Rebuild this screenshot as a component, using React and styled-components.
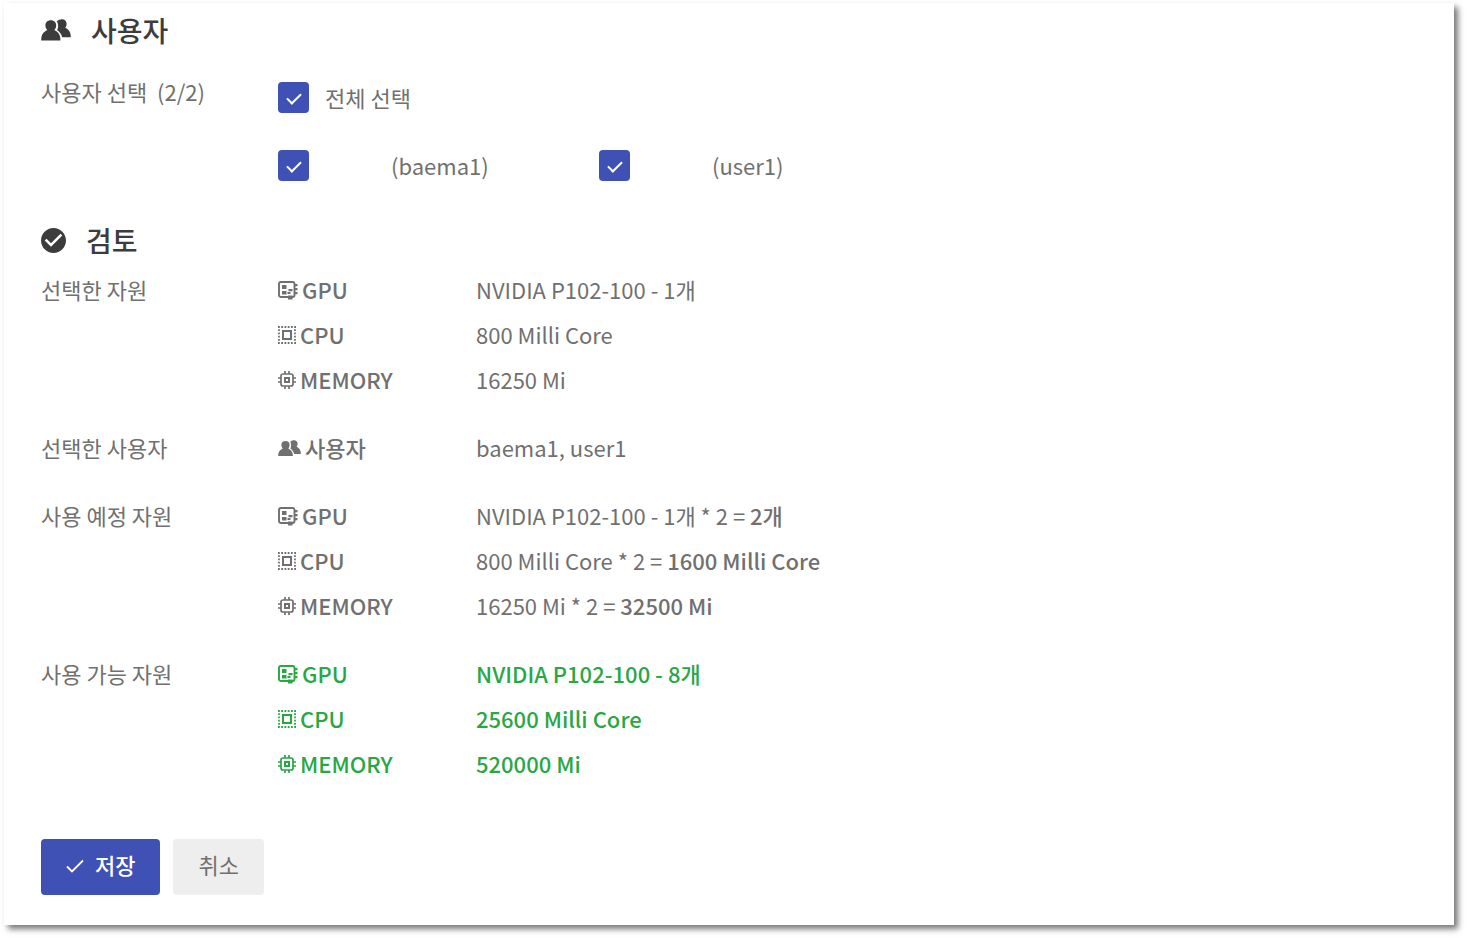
import styled, { createGlobalStyle } from "styled-components";

const GlobalStyle = createGlobalStyle`
  * {
    box-sizing: border-box;
  }

  body {
    margin: 0;
    background-color: white;
    color: #707070;
    font-family: "Noto Sans CJK KR", sans-serif;
    font-size: 22px;
    line-height: 32px;
  }
`;

const Card = styled.form`
  margin: 3px 13px 13px 4px;
  padding: 9px 37px 30px;
  background-color: white;
  box-shadow: 4px 4px 6px #777777;
`;

const Heading = styled.h2`
  display: flex;
  align-items: center;
  gap: 20px;
  margin: ${({ $top }) => $top || 0} 0 0;
  color: #3c3c3c;
  font-size: 28px;
  font-weight: 500;
  line-height: 36px;
`;

const Section = styled.section`
  display: grid;
  grid-template-columns: 237px 1fr;
  margin-top: ${({ $top }) => $top || "36px"};
`;

const Label = styled.div`
  white-space: pre;
`;

const Users = styled.div`
  display: grid;
  grid-template-columns: 321px 1fr;
  row-gap: 36px;
  padding-top: 6px;
`;

const CheckLabel = styled.label`
  display: flex;
  align-items: center;
  gap: ${({ $wide }) => ($wide ? "82px" : "16px")};
  grid-column: ${({ $wide }) => ($wide ? "auto" : "1 / -1")};
`;

const Checkbox = styled.input`
  display: grid;
  place-items: center;
  appearance: none;
  width: 31px;
  height: 31px;
  margin: 0;
  border-radius: 4px;
  background-color: #3f51b5;

  &::after {
    content: "";
    width: 12px;
    height: 6px;
    margin-bottom: 1px;
    border-bottom: 2px solid white;
    border-left: 2px solid white;
    rotate: -45deg;
  }
`;

const Resources = styled.dl`
  display: grid;
  grid-template-columns: 198px 1fr;
  row-gap: 13px;
  margin: 0;
  color: ${({ $available }) => ($available ? "#28a745" : "inherit")};
  font-weight: ${({ $available }) => ($available ? 500 : 400)};
`;

const Term = styled.dt`
  display: flex;
  align-items: center;
  gap: 4px;
  font-weight: 500;

  svg {
    margin-top: 2px;
  }
`;

const Value = styled.dd`
  margin: 0;

  strong {
    font-weight: 500;
  }
`;

const Actions = styled.div`
  display: flex;
  gap: 13px;
  margin-top: 60px;
`;

const Button = styled.button`
  display: flex;
  align-items: center;
  gap: 11px;
  height: 56px;
  padding: 0 25px 6px;
  border: 0;
  border-radius: 4px;
  background-color: ${({ $primary }) => ($primary ? "#3f51b5" : "#eeeeee")};
  color: ${({ $primary }) => ($primary ? "white" : "#707070")};
  font: inherit;
  font-weight: ${({ $primary }) => ($primary ? 500 : 400)};

  svg {
    margin-top: 3px;
  }
`;

function PeopleIcon({ width }) {
  return (
    <svg width={width} viewBox="0 0 30 22" fill="currentColor">
      <path d="M9.800 1.200c3.300 0 5.400 2.200 5.400 5.100 0 2-.7 3.600-1.800 4.700 2.800 1.300 5.100 3.600 5.700 6.700.2 1.200.3 2.500.3 3.800H.2c0-1.300.1-2.600.3-3.800.6-3.100 2.900-5.400 5.700-6.700-1.100-1.100-1.800-2.700-1.800-4.700 0-2.900 2.100-5.100 5.400-5.100z" />
      <path d="M20.900.3c2.900 0 4.700 2 4.700 4.500 0 1.700-.5 3-1.400 4 2.700 1.200 4.800 3.300 5.300 6.100.2 1.100.3 2.300.3 3.400h-8.600c-.7-2.900-2.600-5.500-5.100-7.200.7-1.400 1.100-2.900 1-4.600-.1-1.600-.5-3.100-1.200-4.200C17.100 1 18.800.3 20.900.3z" />
    </svg>
  );
}

function ReviewIcon() {
  return (
    <svg width="25" viewBox="2 2 20 20" fill="currentColor">
      <path d="M12 2C6.480 2 2 6.480 2 12s4.480 10 10 10 10-4.480 10-10S17.520 2 12 2zm-2 15l-5-5 1.410-1.410L10 14.170l7.590-7.590L19 8l-9 9z" />
    </svg>
  );
}

function GpuIcon() {
  return (
    <svg width="20" viewBox="0 0 20 20" fill="currentColor">
      <rect x="1" y="2" width="15.500" height="15" rx="2" fill="none" stroke="currentColor" strokeWidth="1.900" />
      <path d="M4 5h4.500v4H4zM4 11h4.500v3.500H4zM10.500 9h4v2.200h-4zM9.500 12h3v2h-3zM16 4h3.500v2.200H16zM16 8h3.500v2.200H16zM16 12h3.500v2.200H16zM10 15.500h4.500V19.500H10z" />
    </svg>
  );
}

function CpuIcon() {
  return (
    <svg width="18" viewBox="0 0 18 18" fill="none" stroke="currentColor">
      <path
        d="M0 1h18M0 17h18M1 3.200v12M17 3.200v12"
        strokeWidth="1.800"
        strokeDasharray="1.800 1.440"
      />
      <rect x="5" y="5" width="8" height="8" strokeWidth="2" />
    </svg>
  );
}

function MemoryIcon() {
  return (
    <svg width="18" viewBox="0 0 18 18" fill="none" stroke="currentColor" strokeWidth="1.700">
      <rect x="3" y="3" width="12" height="12" rx="2" />
      <rect x="7" y="7" width="4" height="4" strokeWidth="2" />
      <path d="M7 0v3M11 0v3M7 15v3M11 15v3M0 7h3M0 11h3M15 7h3M15 11h3" />
    </svg>
  );
}

function CheckIcon() {
  return (
    <svg width="18" viewBox="0 0 18 14" fill="none" stroke="currentColor" strokeWidth="1.800">
      <path d="M1 7.500l5 5L17 1.500" />
    </svg>
  );
}

function ResourceList({ gpu, cpu, memory, available }) {
  return (
    <Resources $available={available}>
      <Term>
        <GpuIcon />
        GPU
      </Term>
      <Value>{gpu}</Value>
      <Term>
        <CpuIcon />
        CPU
      </Term>
      <Value>{cpu}</Value>
      <Term>
        <MemoryIcon />
        MEMORY
      </Term>
      <Value>{memory}</Value>
    </Resources>
  );
}

export default function App() {
  return (
    <>
      <GlobalStyle />
      <Card>
        <Heading>
          <PeopleIcon width="30" />
          사용자
        </Heading>
        <Section $top="27px">
          <Label>사용자 선택  (2/2)</Label>
          <Users>
            <CheckLabel>
              <Checkbox type="checkbox" defaultChecked />
              전체 선택
            </CheckLabel>
            <CheckLabel $wide>
              <Checkbox type="checkbox" defaultChecked />
              (baema1)
            </CheckLabel>
            <CheckLabel $wide>
              <Checkbox type="checkbox" defaultChecked />
              (user1)
            </CheckLabel>
          </Users>
        </Section>

        <Heading $top="41px">
          <ReviewIcon />
          검토
        </Heading>
        <Section $top="15px">
          <Label>선택한 자원</Label>
          <ResourceList
            gpu="NVIDIA P102-100 - 1개"
            cpu="800 Milli Core"
            memory="16250 Mi"
          />
        </Section>
        <Section>
          <Label>선택한 사용자</Label>
          <Resources>
            <Term>
              <PeopleIcon width="23" />
              사용자
            </Term>
            <Value>baema1, user1</Value>
          </Resources>
        </Section>
        <Section>
          <Label>사용 예정 자원</Label>
          <ResourceList
            gpu={
              <>
                NVIDIA P102-100 - 1개 * 2 = <strong>2개</strong>
              </>
            }
            cpu={
              <>
                800 Milli Core * 2 = <strong>1600 Milli Core</strong>
              </>
            }
            memory={
              <>
                16250 Mi * 2 = <strong>32500 Mi</strong>
              </>
            }
          />
        </Section>
        <Section>
          <Label>사용 가능 자원</Label>
          <ResourceList
            available
            gpu="NVIDIA P102-100 - 8개"
            cpu="25600 Milli Core"
            memory="520000 Mi"
          />
        </Section>

        <Actions>
          <Button type="button" $primary>
            <CheckIcon />
            저장
          </Button>
          <Button type="button">취소</Button>
        </Actions>
      </Card>
    </>
  );
}
